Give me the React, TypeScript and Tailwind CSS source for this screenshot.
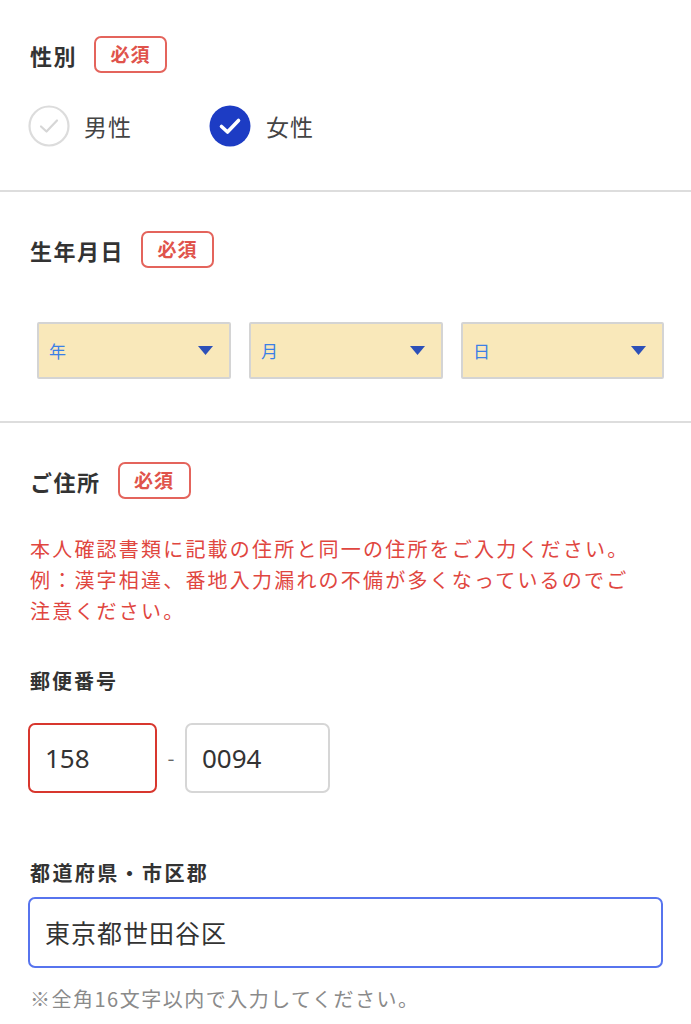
import React from "react";

const font = { fontFamily: '"Noto Sans CJK JP", "Noto Sans", sans-serif' };

function Badge() {
  return (
    <span className="inline-flex h-[37px] w-[73px] items-center justify-center rounded-[7px] border-2 border-[#e4645c] text-[19px] font-bold text-[#e0534b] tracking-[1px]">
      必須
    </span>
  );
}

function Header({ label }: { label: string }) {
  return (
    <div className="flex h-[37px] items-center gap-[17px]">
      <span className="text-[22px] font-bold leading-none tracking-[1.5px] text-[#333]">{label}</span>
      <Badge />
    </div>
  );
}

function Check({ on }: { on: boolean }) {
  return on ? (
    <svg width="42" height="42" viewBox="0 0 42 42">
      <circle cx="21" cy="21" r="20.5" fill="#1d3cc4" />
      <path d="M12.5 21.5 L18.5 27 L29.5 15.5" fill="none" stroke="#fff" strokeWidth="3.6" strokeLinecap="round" strokeLinejoin="round" />
    </svg>
  ) : (
    <svg width="42" height="42" viewBox="0 0 42 42">
      <circle cx="21" cy="21" r="19.5" fill="#fff" stroke="#dcdcdc" strokeWidth="2.2" />
      <path d="M13 21.5 L18.5 26.5 L29 15.5" fill="none" stroke="#d6d6d6" strokeWidth="2.2" strokeLinecap="round" strokeLinejoin="round" />
    </svg>
  );
}

function Select({ label, w }: { label: string; w: string }) {
  return (
    <div className={`flex h-[57px] ${w} items-center justify-between rounded-[2px] border-2 border-[#d4d4d4] bg-[#f9e8ba] pl-[10px] pr-[16px]`}>
      <span className="text-[17px] text-[#3b7fe6]">{label}</span>
      <svg width="15" height="9" viewBox="0 0 15 9">
        <path d="M0 0 H15 L7.5 9 Z" fill="#2d50b8" />
      </svg>
    </div>
  );
}

export default function App() {
  return (
    <div className="min-h-[1024px] w-[691px] bg-white" style={font}>
      {/* 性別 */}
      <section className="pl-[30px] pt-[36px] pb-[43px]">
        <Header label="性別" />
        <div className="mt-[32px] flex h-[42px] items-center">
          <div className="flex w-[181px] items-center gap-[14px] -ml-[2px]">
            <Check on={false} />
            <span className="text-[23px] tracking-[1px] text-[#444]">男性</span>
          </div>
          <div className="flex items-center gap-[15px]">
            <Check on={true} />
            <span className="text-[23px] tracking-[1px] text-[#444]">女性</span>
          </div>
        </div>
      </section>
      <div className="h-[2px] bg-[#dddddd]" />

      {/* 生年月日 */}
      <section className="pl-[30px] pt-[39px] pb-[42px]">
        <Header label="生年月日" />
        <div className="mt-[54px] ml-[7px] flex gap-[18px]">
          <Select label="年" w="w-[194px]" />
          <Select label="月" w="w-[194px]" />
          <Select label="日" w="w-[203px]" />
        </div>
      </section>
      <div className="h-[2px] bg-[#dddddd]" />

      {/* ご住所 */}
      <section className="pl-[30px] pt-[39px] pr-[28px]">
        <Header label="ご住所" />
        <p className="mt-[34px] w-[606px] text-[20px] leading-[31px] tracking-[2.2px] text-[#e0463f]">
          本人確認書類に記載の住所と同一の住所をご入力ください。例：漢字相違、番地入力漏れの不備が多くなっているのでご注意ください。
        </p>
        <div className="mt-[41px] text-[20px] font-bold leading-[28px] tracking-[2px] text-[#333]">郵便番号</div>
        <div className="mt-[28px] -ml-[2px] flex items-center">
          <div className="flex h-[70px] w-[129px] items-center rounded-[7px] border-2 border-[#d8372e] pl-[15px] text-[26px] text-[#333]" style={{ fontFamily: '"Noto Sans", sans-serif' }}>
            158
          </div>
          <span className="w-[28px] text-center text-[20px] text-[#666]">-</span>
          <div className="flex h-[70px] w-[145px] items-center rounded-[7px] border-2 border-[#d6d6d6] pl-[15px] text-[26px] text-[#333]" style={{ fontFamily: '"Noto Sans", sans-serif' }}>
            0094
          </div>
        </div>
        <div className="mt-[66px] text-[20px] font-bold leading-[28px] tracking-[2.4px] text-[#333]">都道府県・市区郡</div>
        <div className="mt-[10px] -ml-[2px] flex h-[71px] w-[635px] items-center rounded-[7px] border-2 border-[#5774ee] pl-[15px] text-[25px] tracking-[1px] text-[#333]">
          東京都世田谷区
        </div>
        <div className="mt-[17px] text-[20px] leading-[28px] tracking-[1.5px] text-[#8a8a8a]">
          ※全角16文字以内で入力してください。
        </div>
      </section>
    </div>
  );
}
